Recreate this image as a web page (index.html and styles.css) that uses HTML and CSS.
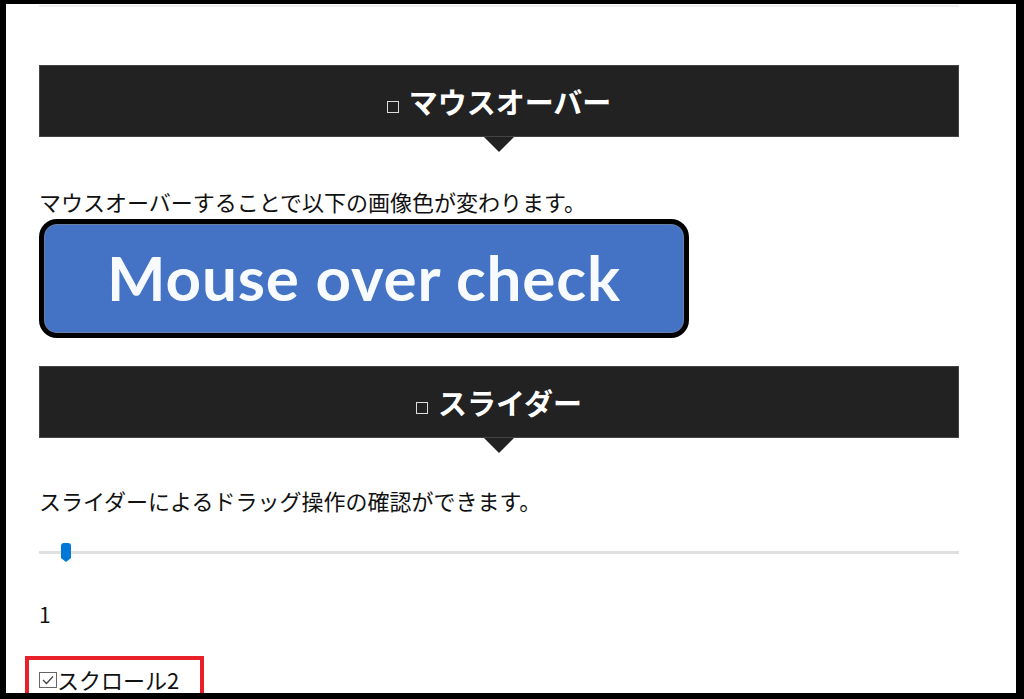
FILE: index.html
```html
<!DOCTYPE html>
<html lang="ja">
  <head>
    <meta charset="UTF-8" />
    <meta name="viewport" content="width=device-width, initial-scale=1.0" />
    <title>動作確認</title>
    <link rel="stylesheet" href="styles.css">
  </head>
  <body>
    <div class="screen">
      <div class="rule"></div>

      <h2 class="heading"><span class="box"></span>マウスオーバー</h2>
      <p class="lead first">マウスオーバーすることで以下の画像色が変わります。</p>
      <div class="mouse-btn">
        <span>Mouse over check</span>
      </div>

      <h2 class="heading second"><span class="box"></span>スライダー</h2>
      <p class="lead slider-lead">スライダーによるドラッグ操作の確認ができます。</p>
      <div class="slider">
        <div class="track"></div>
        <svg class="thumb" width="10" height="19" viewBox="0 0 10 19">
          <path d="M0 3 Q0 0 3 0 H7 Q10 0 10 3 V15 L5 19 L0 15 Z" fill="#0078d7" />
        </svg>
      </div>
      <p class="value">1</p>

      <div class="marked">
        <svg class="check" width="18" height="16" viewBox="0 0 18 16">
          <rect x="0.5" y="0.5" width="17" height="15" fill="none" stroke="#666" />
          <path d="M4 8 L7.5 11.5 L14 4.5" fill="none" stroke="#444" stroke-width="1.3" />
        </svg><span>スクロール2</span>
      </div>
    </div>
  </body>
</html>
```

FILE: styles.css
```css
* {
  box-sizing: border-box;
}

body {
  margin: 0;
  background: #000;
  padding: 4px 8px 6px 6px;
  font-family: "Noto Sans CJK JP", "Noto Sans", sans-serif;
  color: #111;
}

.screen {
  background: #fff;
  height: 689px;
  overflow: hidden;
  padding-left: 33px;
}

.rule {
  width: 920px;
  height: 2px;
  margin-top: 1px;
  background: #eee;
}

.heading {
  position: relative;
  width: 920px;
  height: 72px;
  margin: 58px 0 0;
  background: #222;
  border: 1px solid #444;
  color: #fff;
  font-size: 29px;
  font-weight: bold;
  line-height: 70px;
  text-align: center;
}

.heading::after {
  content: "";
  position: absolute;
  left: 50%;
  bottom: -16px;
  margin-left: -15px;
  border-top: 15px solid #222;
  border-left: 15px solid transparent;
  border-right: 15px solid transparent;
}

.heading .box {
  display: inline-block;
  width: 12px;
  height: 12px;
  border: 1px solid #ddd;
  margin-right: 10px;
  vertical-align: 1px;
}

.heading.second {
  margin-top: 28px;
}

.lead {
  margin: 49px 0 0;
  font-size: 22px;
  line-height: 30px;
}

.slider-lead {
  margin-top: 47px;
}

.mouse-btn {
  display: flex;
  align-items: center;
  justify-content: center;
  width: 650px;
  height: 119px;
  margin-top: 3px;
  background: #4472c4;
  border: 5px solid #000;
  border-radius: 18px;
  box-shadow: inset 0 0 0 1px #6a7fa8;
}

.mouse-btn span {
  color: #f7fbff;
  font-family: Lato, "Open Sans", sans-serif;
  font-weight: bold;
  font-size: 62px;
  letter-spacing: 0.8px;
  margin-top: -4px;
}

.slider {
  position: relative;
  width: 920px;
  height: 19px;
  margin-top: 28px;
}

.slider .track {
  position: absolute;
  left: 0;
  right: 0;
  top: 8px;
  height: 3px;
  background: #e0e0e0;
}

.slider .thumb {
  position: absolute;
  left: 22px;
  top: 0;
}

.value {
  margin: 37px 0 0;
  font-size: 21px;
  line-height: 30px;
}

.marked {
  display: flex;
  align-items: flex-start;
  width: 179px;
  height: 50px;
  margin: 27px 0 0 -14px;
  padding: 4px 0 0 10px;
  border: 4px solid #e8202a;
  font-size: 22px;
  line-height: 30px;
}

.marked .check {
  margin-top: 8px;
}
```
